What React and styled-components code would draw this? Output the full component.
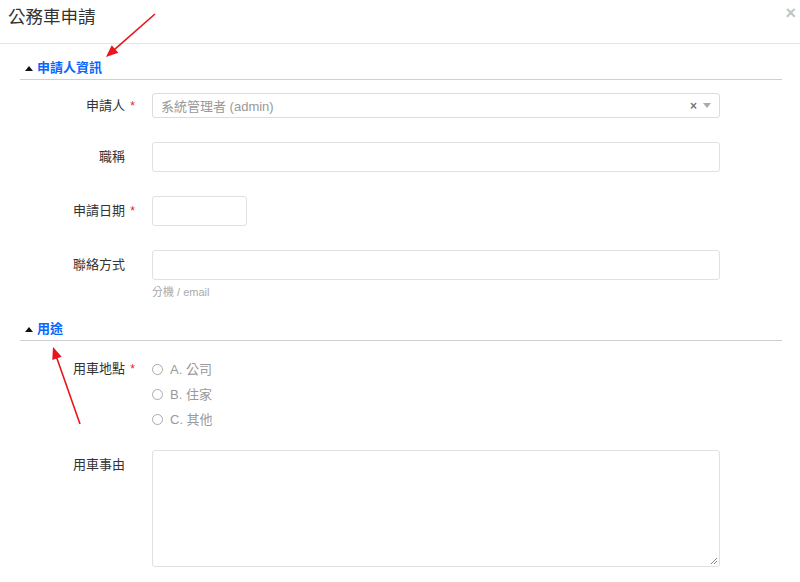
import React from "react";
import styled, { createGlobalStyle } from "styled-components";

const Global = createGlobalStyle`
  html, body { margin: 0; padding: 0; background: #fff; }
  body { font-family: "Liberation Sans", "Noto Sans CJK TC", sans-serif; color: #333; }
  * { box-sizing: border-box; }
`;

const Page = styled.div`
  position: relative;
  width: 800px;
  height: 582px;
  overflow: hidden;
  background: #fff;
`;

const Header = styled.div`
  display: flex;
  justify-content: space-between;
  align-items: flex-start;
  height: 44px;
  padding: 5px 4px 0 8px;
  border-bottom: 1px solid #e5e5e5;
`;

const Title = styled.h4`
  margin: 0;
  font-size: 17.5px;
  line-height: 24px;
  font-weight: 400;
  color: #333;
`;

const Close = styled.span`
  font-size: 18px;
  line-height: 16px;
  font-weight: 700;
  color: #c4c4c4;
`;

const Body = styled.div`
  padding: 0 18px 0 20px;
`;

const SectionTitle = styled.div`
  display: flex;
  align-items: center;
  gap: 4px;
  margin-top: ${(p) => p.$mt}px;
  margin-bottom: 13px;
  padding: 0 0 1px 5px;
  line-height: 20px;
  height: 22px;
  border-bottom: 1px solid #cfcfcf;
  font-size: 13px;
  font-weight: 700;
  color: #0a66ff;
`;

const Caret = styled.span`
  width: 0;
  height: 0;
  border-left: 4px solid transparent;
  border-right: 4px solid transparent;
  border-bottom: 5px solid #111;
`;

const Group = styled.div`
  display: grid;
  grid-template-columns: 132px 568px;
  align-items: start;
  margin-bottom: ${(p) => p.$mb ?? 24}px;
`;

const Label = styled.label`
  position: relative;
  text-align: right;
  padding-right: 27px;
  font-size: 13px;
  line-height: ${(p) => p.$lh ?? 30}px;
  color: #333;
`;

const Star = styled.span`
  position: absolute;
  right: 17px;
  top: 0;
  color: #e02424;
  font-size: 12px;
`;

const Select = styled.div`
  display: flex;
  align-items: center;
  height: 25px;
  padding: 0 8px;
  border: 1px solid #dcdcdc;
  border-radius: 3px;
  font-size: 13px;
  color: #999;
`;

const SelectText = styled.span`
  flex: 1;
`;

const Clear = styled.span`
  font-size: 12px;
  font-weight: 700;
  color: #777;
  margin-right: 6px;
`;

const Down = styled.span`
  width: 0;
  height: 0;
  border-left: 4px solid transparent;
  border-right: 4px solid transparent;
  border-top: 5px solid #aaa;
`;

const Input = styled.div`
  width: ${(p) => p.$w ?? "100%"};
  height: 30px;
  border: 1px solid #e0e0e0;
  border-radius: 3px;
`;

const Help = styled.div`
  margin-top: 5px;
  font-size: 11px;
  line-height: 15px;
  color: #aaa;
`;

const Radios = styled.div`
  display: flex;
  flex-direction: column;
  padding-top: 2px;
`;

const RadioItem = styled.div`
  display: flex;
  align-items: center;
  height: 25px;
  font-size: 13px;
  color: #999;
`;

const Circle = styled.span`
  width: 11px;
  height: 11px;
  border: 1px solid #aaa;
  border-radius: 50%;
  margin: 2px 7px 0 0;
`;

const TextArea = styled.div`
  position: relative;
  height: 117px;
  border: 1px solid #e0e0e0;
  border-radius: 3px;
`;

const Grip = styled.svg`
  position: absolute;
  right: 1px;
  bottom: 1px;
`;

const Arrows = styled.svg`
  position: absolute;
  left: 0;
  top: 0;
  pointer-events: none;
`;

function Arrow({ x1, y1, x2, y2 }) {
  const dx = x2 - x1, dy = y2 - y1;
  const len = Math.hypot(dx, dy);
  const ux = dx / len, uy = dy / len;
  const hl = 12, hw = 5;
  const bx = x2 - ux * hl, by = y2 - uy * hl;
  const pts = `${x2},${y2} ${bx - uy * hw},${by + ux * hw} ${bx + uy * hw},${by - ux * hw}`;
  return (
    <g>
      <line x1={x1} y1={y1} x2={bx + ux * 2} y2={by + uy * 2} stroke="#e8161c" strokeWidth="1.6" />
      <polygon points={pts} fill="#e8161c" />
    </g>
  );
}

export default function App() {
  return (
    <Page>
      <Global />
      <Header>
        <Title>公務車申請</Title>
        <Close>×</Close>
      </Header>
      <Body>
        <SectionTitle $mt={14}>
          <Caret />
          申請人資訊
        </SectionTitle>
        <Group $mb={23}>
          <Label $lh={26}>
            申請人<Star>*</Star>
          </Label>
          <Select>
            <SelectText>系統管理者 (admin)</SelectText>
            <Clear>×</Clear>
            <Down />
          </Select>
        </Group>
        <Group>
          <Label>職稱</Label>
          <Input />
        </Group>
        <Group>
          <Label>
            申請日期<Star>*</Star>
          </Label>
          <Input $w="95px" />
        </Group>
        <Group $mb={0}>
          <Label>聯絡方式</Label>
          <div>
            <Input />
            <Help>分機 / email</Help>
          </div>
        </Group>
        <SectionTitle $mt={19}>
          <Caret />
          用途
        </SectionTitle>
        <Group $mb={19}>
          <Label>
            用車地點<Star>*</Star>
          </Label>
          <Radios>
            <RadioItem>
              <Circle />A. 公司
            </RadioItem>
            <RadioItem>
              <Circle />B. 住家
            </RadioItem>
            <RadioItem>
              <Circle />C. 其他
            </RadioItem>
          </Radios>
        </Group>
        <Group>
          <Label>用車事由</Label>
          <TextArea>
            <Grip width="8" height="8" viewBox="0 0 8 8">
              <line x1="1" y1="7" x2="7" y2="1" stroke="#888" strokeWidth="1" />
              <line x1="4" y1="7" x2="7" y2="4" stroke="#888" strokeWidth="1" />
            </Grip>
          </TextArea>
        </Group>
      </Body>
      <Arrows width="800" height="582">
        <Arrow x1={155} y1={14} x2={106} y2={57} />
        <Arrow x1={80} y1={424} x2={53} y2={347} />
      </Arrows>
    </Page>
  );
}
